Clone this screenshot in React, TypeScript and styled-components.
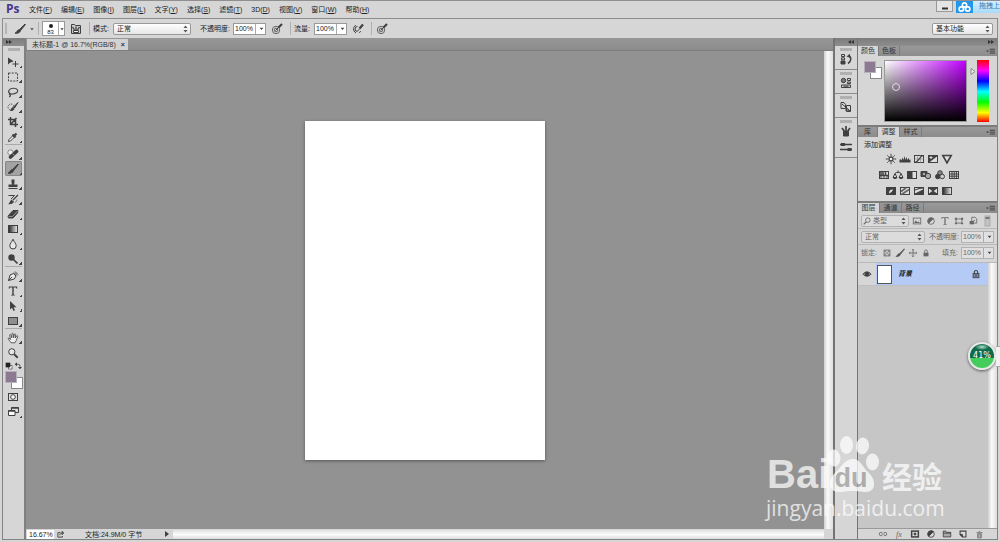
import React from "react";
import styled, { createGlobalStyle, css } from "styled-components";

const sans = `"Liberation Sans", "Noto Sans CJK SC", sans-serif`;

const Global = createGlobalStyle`
  * { box-sizing: border-box; }
  body { margin: 0; font: 7px/10px ${sans}; color: #222; background: #d6d6d6; }
  button, input, select { font: inherit; color: inherit; margin: 0; padding: 0; border: 0; background: none; border-radius: 0; outline: 0; }
  button { display: flex; align-items: center; justify-content: center; flex: none; }
`;

/* ---------- frame ---------- */
const Shell = styled.div`
  position: relative;
  display: flex;
  flex-direction: column;
  height: 100vh;
  overflow: hidden;
  border-top: 1px solid #8f8f8f;
  background: #d6d6d6;
`;
const MenuBar = styled.nav`
  display: flex;
  align-items: center;
  gap: 9px;
  height: 17px;
  padding-left: 6px;
  flex: none;
`;
const Logo = styled.b`
  font: bold 12px/14px "Open Sans", sans-serif;
  color: #46378c;
  width: 14px;
  padding-bottom: 2px;
`;
const MenuItem = styled.button`
  white-space: nowrap;
  display: block;
`;
const OptionsBar = styled.div`
  display: flex;
  align-items: center;
  flex: none;
  height: 20px;
  margin: 0 2px;
  padding: 0 4px 0 2px;
  border: solid #8c8c8c;
  border-width: 1px 1px 0;
`;
const Main = styled.div`
  display: flex;
  flex: 1;
  min-height: 0;
  margin: 0 2px 2px;
  border: solid #838383;
  border-width: 0 1px 1px;
`;
const Divider = styled.i`
  width: 1px;
  height: 13px;
  background: #b0b0b0;
  margin: 0 3px;
`;
const Handle = styled.i`
  width: 2px;
  height: 11px;
  margin-right: 4px;
  background: #b4b4b4;
`;
const Grow = styled.span`
  flex: 1;
`;

/* ---------- controls ---------- */
const IconButton = styled.button<{ $w?: number; $h?: number }>`
  width: ${(p) => p.$w ?? 14}px;
  height: ${(p) => p.$h ?? 12}px;
`;
const FieldLabel = styled.label<{ $w: number; $dim?: boolean; $gap?: number }>`
  flex: none;
  width: ${(p) => p.$w}px;
  margin-left: ${(p) => p.$gap ?? 0}px;
  white-space: nowrap;
  color: ${(p) => (p.$dim ? "#666" : "#222")};
`;
const SelectBox = styled.span<{ $w: number; $dim?: boolean; $pad?: number }>`
  display: flex;
  align-items: center;
  flex: none;
  width: ${(p) => p.$w}px;
  height: 12px;
  padding-right: 2px;
  border: 1px solid ${(p) => (p.$dim ? "#b2b2b2" : "#999")};
  border-radius: 2px;
  background: ${(p) => (p.$dim ? "#dcdcdc" : "linear-gradient(#fff, #e6e6e6)")};
  color: ${(p) => (p.$dim ? "#666" : "#222")};
  select {
    appearance: none;
    flex: 1;
    min-width: 0;
    height: 10px;
    padding-left: ${(p) => p.$pad ?? 3}px;
  }
`;
const NumberBox = styled.span<{ $dim?: boolean }>`
  display: flex;
  align-items: center;
  flex: none;
  height: 12px;
  width: 33px;
  border: 1px solid ${(p) => (p.$dim ? "#b2b2b2" : "#999")};
  background: ${(p) => (p.$dim ? "#e0e0e0" : "#fff")};
  color: ${(p) => (p.$dim ? "#666" : "#222")};
  input {
    width: 21px;
    height: 10px;
    padding-left: 1px;
  }
  button {
    width: 11px;
    height: 10px;
    border-left: 1px solid #aaa;
  }
`;
const BrushBox = styled.button`
  width: 23px;
  height: 15px;
  border: 1px solid #999;
  background: #fff;
`;
const BrushPreview = styled.span`
  display: flex;
  flex-direction: column;
  align-items: center;
  width: 15px;
  font-size: 6px;
  line-height: 6px;
`;
const BrushArrow = styled.span`
  display: flex;
  align-items: center;
  justify-content: center;
  width: 6px;
  height: 13px;
  border-left: 1px solid #aaa;
`;

/* ---------- toolbox ---------- */
const DockHead = styled.div<{ $end?: boolean }>`
  display: flex;
  align-items: center;
  justify-content: ${(p) => (p.$end ? "flex-end" : "flex-start")};
  height: 8px;
  flex: none;
  padding: 0 3px;
  background: linear-gradient(#7c7c7c, #8e8e8e);
`;
const Toolbox = styled.aside`
  display: flex;
  flex-direction: column;
  width: 23px;
  flex: none;
  border-right: 2px solid #808080;
`;
const Grip = styled.i`
  width: 12px;
  height: 3px;
  margin: 2px auto 0;
  background: #b0b0b0;
  flex: none;
`;
const ToolList = styled.div`
  display: flex;
  flex-direction: column;
  padding: 3px 2px 0;
`;
const ToolButton = styled.button<{ $active?: boolean }>`
  height: 15px;
  width: 17px;
  padding-left: 1px;
  border-radius: 2px;
  ${(p) => p.$active && css`background: #a2a2a2; box-shadow: inset 0 0 0 1px #868686;`}
`;
const Flyout = styled.i<{ $hidden?: boolean }>`
  align-self: flex-end;
  width: 3px;
  height: 3px;
  margin-bottom: 1px;
  background: linear-gradient(135deg, transparent 50%, #444 50%);
  visibility: ${(p) => (p.$hidden ? "hidden" : "visible")};
`;
const ToolRule = styled.i`
  height: 1px;
  background: #aaa;
  margin-bottom: 1px;
`;
const MiniRow = styled.div`
  display: flex;
  justify-content: space-between;
  height: 11px;
  align-items: center;
`;
const Swatches = styled.div`
  display: grid;
  grid-template-columns: 6px 6px 6px;
  grid-template-rows: 6px 6px 6px;
  width: 18px;
  flex: none;
`;
const Swatch = styled.button<{ $front?: boolean }>`
  grid-area: ${(p) => (p.$front ? "1 / 1 / 3 / 3" : "2 / 2 / 4 / 4")};
  z-index: ${(p) => (p.$front ? 1 : 0)};
  background: ${(p) => (p.$front ? "#8c7a92" : "#fff")};
  border: 1px solid ${(p) => (p.$front ? "#b9b0bd" : "#888")};
`;

/* ---------- document ---------- */
const Doc = styled.main`
  display: flex;
  flex-direction: column;
  flex: 1;
  min-width: 0;
  background: #929292;
`;
const DocTabs = styled.div`
  display: flex;
  height: 13px;
  flex: none;
  background: linear-gradient(#979797, #8c8c8c);
  border-bottom: 1px solid #7e7e7e;
`;
const DocTab = styled.div`
  display: flex;
  align-items: center;
  gap: 5px;
  margin: 1px 0 0 1px;
  padding: 0 3px 0 5px;
  height: 11px;
  background: #d2d2d2;
  color: #333;
  white-space: nowrap;
`;
const DocBody = styled.div`
  display: flex;
  flex: 1;
  min-height: 0;
`;
const Canvas = styled.div`
  display: flex;
  flex: 1;
  align-items: center;
  justify-content: center;
`;
const Paper = styled.div`
  width: 240px;
  height: 339px;
  background: #fff;
  box-shadow: 0 1px 3px #555;
`;
const ScrollV = styled.div`
  width: 9px;
  flex: none;
  background: linear-gradient(90deg, #cfcfcf, #fafafa 40%, #dedede);
`;
const StatusBar = styled.footer`
  display: flex;
  align-items: center;
  height: 10px;
  flex: none;
  padding-left: 1px;
  background: #d6d6d6;
  line-height: 9px;
  white-space: nowrap;
`;
const Zoom = styled.input`
  width: 27px;
  height: 9px;
  background: #fff;
  padding-left: 2px;
`;
const StatusText = styled.span`
  width: 95px;
  padding-left: 19px;
`;
const ScrollH = styled.div`
  flex: 1;
  height: 9px;
  margin-right: 9px;
  background: linear-gradient(#e0e0e0, #fbfbfb 50%, #dcdcdc);
`;

/* ---------- docks ---------- */
const IconDock = styled.aside`
  display: flex;
  flex-direction: column;
  width: 25px;
  flex: none;
  border: solid #747474;
  border-width: 0 1px 0 2px;
`;
const DockGroup = styled.div`
  display: flex;
  flex-direction: column;
  align-items: center;
  padding-bottom: 2px;
  border-bottom: 1px solid #8b8b8b;
`;
const Panels = styled.aside`
  display: flex;
  flex-direction: column;
  width: 139px;
  flex: none;
`;
const TabStrip = styled.div`
  display: flex;
  height: 10px;
  flex: none;
  padding-right: 2px;
  background: linear-gradient(#999, #8c8c8c);
`;
const PanelTab = styled.button<{ $on?: boolean; $w?: number }>`
  height: 10px;
  width: ${(p) => p.$w ?? 21}px;
  white-space: nowrap;
  color: #333;
  background: ${(p) => (p.$on ? "#d6d6d6" : "transparent")};
  border-right: 1px solid #7c7c7c;
`;
const PanelBody = styled.section<{ $h: number }>`
  height: ${(p) => p.$h}px;
  flex: none;
  border-bottom: 2px solid #7c7c7c;
`;
const ColorBody = styled(PanelBody)`
  display: flex;
  align-items: flex-start;
  padding: 4px 8px 0 6px;
`;
const PairSpot = styled.div`
  padding-top: 1px;
`;
const Field = styled.div`
  position: relative;
  flex: 1;
  height: 62px;
  margin-left: 2px;
  border: 1px solid #999;
  background: linear-gradient(transparent, #000), linear-gradient(90deg, #fff, #c000ff);
`;
const Picker = styled.i`
  position: absolute;
  left: 7px;
  top: 22px;
  width: 8px;
  height: 8px;
  border: 1px solid #ddd;
  border-radius: 50%;
`;
const Hue = styled.div`
  width: 12px;
  height: 62px;
  background: linear-gradient(#f00, #f0f 17%, #00f 34%, #0ff 51%, #0f0 68%, #ff0 85%, #f00);
`;
const HueArrow = styled.span`
  display: flex;
  padding: 8px 1px 0 3px;
`;
const AdjustTitle = styled.div`
  padding: 3px 6px 0;
  height: 16px;
`;
const AdjustRow = styled.div`
  display: flex;
  justify-content: center;
  height: 16px;
  padding-right: 17px;
`;
const LayerRow = styled.div`
  display: flex;
  align-items: center;
  flex: none;
  height: 16px;
  padding: 0 3px;
  border-bottom: 1px solid #bababa;
`;
const LockRow = styled(LayerRow)`
  height: 18px;
  padding-bottom: 2px;
`;
const LayerArea = styled.div`
  display: flex;
  flex: 1;
  min-height: 0;
  background: #c6c6c6;
`;
const LayerList = styled.div`
  flex: 1;
`;
const Layer = styled.div`
  display: flex;
  align-items: center;
  height: 23px;
  background: #b5caf5;
  border-bottom: 1px solid #c0c0c0;
`;
const Eye = styled.button`
  width: 18px;
  height: 22px;
  background: #d6d6d6;
`;
const Thumb = styled.i`
  width: 15px;
  height: 19px;
  margin: 0 6px 0 1px;
  background: #fff;
  border: 1px solid #555;
`;
const LayerName = styled.span`
  flex: 1;
  font-style: italic;
  font-weight: bold;
`;
const LayerFoot = styled.div`
  display: flex;
  align-items: center;
  gap: 2px;
  height: 11px;
  flex: none;
  padding-left: 18px;
  border-top: 1px solid #999;
`;
const Fx = styled.em`
  font: italic 8px/9px "Liberation Serif", serif;
  color: #666;
`;

/* ---------- overlays ---------- */
const WindowTools = styled.div`
  position: absolute;
  top: 0;
  right: 0;
  display: flex;
  align-items: flex-start;
  height: 12px;
`;
const Minimize = styled.button`
  width: 17px;
  height: 11px;
  margin-right: 3px;
  border: 1px solid #999;
  border-top: 0;
  background: #e4e4e4;
`;
const Cloud = styled.button`
  width: 17px;
  height: 12px;
  background: #2196ea;
`;
const Drop = styled.span`
  height: 12px;
  padding-left: 6px;
  white-space: nowrap;
  color: #3c78ab;
  background: linear-gradient(#d3edfd, #a9daf9);
`;
const Meter = styled.div`
  position: absolute;
  right: 0;
  top: 341px;
  display: flex;
  align-items: center;
`;
const Ball = styled.div`
  width: 28px;
  height: 28px;
  border: 2px solid #e6e9e6;
  border-radius: 50%;
  box-shadow: 0 1px 3px #555;
  background: radial-gradient(ellipse 7px 3px at 50% 3px, #b5dfca, transparent), linear-gradient(#0f6a4c 60%, #44cc5c 60%);
  color: #fff;
  font: 8px/24px "DejaVu Sans", sans-serif;
  text-align: center;
`;
const MeterTag = styled.div`
  width: 4px;
  height: 21px;
  background: #f1f1f1;
  border: solid #aaa;
  border-width: 1px 0;
`;
const Watermark = styled.div`
  position: absolute;
  right: 54px;
  bottom: 20px;
  width: 180px;
  color: #fff;
  opacity: 0.72;
  pointer-events: none;
`;
const MarkTop = styled.div`
  display: flex;
  align-items: flex-end;
  height: 61px;
`;
const MarkBai = styled.b`
  width: 60px;
  padding-left: 1px;
  font: bold 40px/40px "Liberation Sans", sans-serif;
`;
const MarkPaw = styled.span`
  display: grid;
  width: 54px;
  height: 60px;
  > * {
    grid-area: 1 / 1;
  }
`;
const MarkDu = styled.b`
  align-self: end;
  justify-self: center;
  padding-right: 4px;
  font: bold 27px/32px "Liberation Sans", sans-serif;
  color: #a2a2a2;
`;
const MarkCn = styled.b`
  padding-left: 2px;
  font: bold 30px/38px "Noto Sans CJK SC", sans-serif;
  white-space: nowrap;
`;
const MarkUrl = styled.div`
  font: 21px/28px "Open Sans", sans-serif;
  white-space: nowrap;
`;

/* ---------- icons, drawn on a 12 x 12 grid ---------- */
const D = "#404040";
const frame = <rect x="1.5" y="2.5" width="9" height="7" fill="#ddd" stroke={D} />;
const brush = (
  <>
    <path d="M11 1 5.6 6.4l1 1L11.4 1.6z" fill={D} />
    <path d="M5 6.6c1 .2 1.4.8 1.3 1.6C5.5 10 3 10.600 1 10.200 3 9.600 3 7.200 5 6.600z" fill={D} />
  </>
);
const target = (
  <>
    <circle cx="5" cy="7" r="3.700" stroke="#666" />
    <circle cx="5" cy="7" r="1.800" stroke="#666" />
    <path d="M4.500 7.500 8 4" />
    <path d="M7.500 4.500 11 1" strokeWidth="2.200" />
  </>
);
const lock = (
  <>
    <rect x="3" y="5.500" width="6" height="4.500" fill="currentColor" stroke="none" />
    <path d="M4.300 5.500V4a1.700 1.700 0 0 1 3.400 0v1.500" />
  </>
);
const icons: Record<string, React.ReactNode> = {
  brush,
  target,
  lock,
  lockOpen: (
    <>
      <rect x="2.500" y="5.500" width="7" height="5" fill="#7484a8" />
      <path d="M4 5.500V3.800a2 2 0 0 1 4 0v1.700M6 7v2" strokeWidth="1.300" />
    </>
  ),
  brushPanel: (
    <>
      <path d="M1.500 10.500v-9h3l1 1h5v8z" fill="#ccc" />
      <path d="m2.500 4 2 3M6 3.500V7M9.500 4l-2 3" strokeWidth="1.300" />
      <path d="M3.500 7.500h5v2h-5z" fill="#eee" />
    </>
  ),
  airbrush: (
    <>
      <path d="M4 2.500C1 3 .5 8 4 10M5.500 3.500a2.500 2.500 0 0 0 0 5" />
      <path d="M5.500 8 8 5.500" />
      <path d="M7.500 5.500 11 1.500" strokeWidth="2.200" />
      <path d="M7 9.500c1 0 1.500-.5 1.500-1.500" />
    </>
  ),
  move: (
    <>
      <path d="M1 1.500v7l2-1.800 3.600-1.500z" fill={D} stroke="none" />
      <path d="M8.500 5v6M5.500 8h6" />
    </>
  ),
  marquee: <rect x="1.500" y="2" width="9" height="8" strokeDasharray="2 1.200" />,
  lasso: <path d="M3 7.500C.5 6 1.500 2.500 6 2.200s6 3 3.500 4.500S4 8.500 3.300 7.600s-1.500 1-.3 1.500-.2 1.400-.8 1.900" strokeWidth="1.100" />,
  quick: (
    <>
      <circle cx="4" cy="6" r="3" strokeDasharray="1 1" />
      <path d="M11 1.500 6.500 6l1 1zM3.500 9.500l2-3 1.700 1.300c-.7 1.500-2 2-3.700 1.700z" fill={D} />
    </>
  ),
  crop: <path d="M3.500 1v7.500H11M1 3.500h7.500V11M9.500 2 4 8" strokeWidth="1.500" />,
  dropper: (
    <>
      <path d="M1.500 10.500 2 8.500l4-4 1.500 1.500-4 4z" fill="#eee" />
      <path d="m5.500 3.500 3 3M7 5l2.500-2.500" strokeWidth="2.200" />
    </>
  ),
  heal: (
    <>
      <circle cx="3.500" cy="4.500" r="2.700" fill="#eee" stroke="#888" />
      <path d="M3.500 9 9.500 3.500" strokeWidth="3.600" strokeLinecap="round" />
      <path d="m5.500 5.500 2 2" stroke="#999" />
    </>
  ),
  stamp: <path d="M4.500 1.500h3v3l-.5 2h3.500v2.500h-9V6.500H5l-.5-2zM1.500 10h9v1h-9z" fill={D} stroke="none" />,
  history: (
    <>
      <path d="M11 2 6 7M2.500 10.500l2-3 1.700 1.300c-.7 1.200-2 1.700-3.700 1.700z" fill={D} strokeWidth="1.300" />
      <path d="M1.500 2.500h6L4 6" />
      <path d="M8 9.500c1.500-.5 2-2 2-3" stroke="#777" />
    </>
  ),
  eraser: (
    <>
      <path d="m1 8 5-5.500h5L10.500 5 6 10H1.500z" fill={D} />
      <path d="m1.500 8.300 4 .2 5-5.500" stroke="#aaa" strokeWidth=".8" />
    </>
  ),
  gradient: (
    <>
      <defs>
        <linearGradient id="ramp">
          <stop offset="0" stopColor="#222" />
          <stop offset="1" stopColor="#eee" />
        </linearGradient>
      </defs>
      <rect x="1.500" y="2.500" width="9" height="7" fill="url(#ramp)" />
    </>
  ),
  drop: <path d="M6 1.200C5 4 2.800 5.500 2.800 7.800a3.200 3.200 0 0 0 6.400 0C9.200 5.500 7 4 6 1.200z" fill="#e8e8e8" />,
  dodge: (
    <>
      <circle cx="4.500" cy="4.500" r="3.200" fill={D} stroke="none" />
      <path d="m6.500 6.500 4 4" strokeWidth="1.700" />
    </>
  ),
  pen: (
    <>
      <path d="M1.500 10.500 3 5l3.500-1.500 2.500 2.500L7.300 9z" fill="#e8e8e8" />
      <path d="m1.500 10.500 3.500-3.500M7 2.500 10 5.500M8 1.500l3 3" />
    </>
  ),
  type: <path d="M1.800 1.500h8.400v2.200h-.6L9 2.500H6.700v7l1.300.4v.6H4v-.6l1.300-.4v-7H3l-.6 1.200h-.6z" fill="currentColor" stroke="none" />,
  arrow: <path d="M3 1v8.500l2-1.800 1.500 3.300 1.500-.7-1.400-3.100H9.500z" fill={D} stroke="none" />,
  rect: <rect x="1.500" y="2.500" width="9" height="7" fill="#8e8e8e" />,
  hand: <path d="M4 10.800 1.200 6.800c-.2-1 .8-1 1.500-.2L3.500 7.500 2.700 3.200c0-.9 1-.9 1.300 0l.8 2.600L5 1.900c.1-.9 1.200-.9 1.300 0l.2 3.800L7.500 2.400c.2-.8 1.200-.6 1.200.2L8.200 6l1.500-2c.5-.7 1.400-.3 1.100.6L9.200 8.500 8 10.800z" fill="#eee" strokeWidth=".8" />,
  zoom: (
    <>
      <circle cx="4.800" cy="4.800" r="3.100" fill="#e8e8e8" />
      <path d="m7.200 7.200 3.500 3.500" strokeWidth="2" />
    </>
  ),
  defaults: (
    <>
      <rect x="5.500" y="5.500" width="5" height="5" fill="#fff" />
      <rect x="1" y="1" width="7" height="7" fill="#222" stroke="none" />
    </>
  ),
  swap: (
    <>
      <path d="M3 3.500h3.500a2.500 2.500 0 0 1 2.500 2.500v3" strokeWidth="1.300" />
      <path d="M4.500.5v6L1 3.500zM6 7.500h6L9 11z" fill={D} stroke="none" />
    </>
  ),
  mask: (
    <>
      {frame}
      <circle cx="6" cy="6" r="2.300" fill="#fff" />
    </>
  ),
  screen: (
    <>
      <path d="M4.500 1.500h7v5h-7z" fill="#ddd" />
      <path d="M1.500 4.500h6.500v5H1.500z" fill="#fff" />
      <path d="M1.500 5h6.500M4.500 2h7" strokeWidth="1.600" />
    </>
  ),
  dockHistory: (
    <>
      <path d="M1.500 1.500h3v2h-3zM1.500 4.800h3v2h-3z" />
      <path d="M1 8h4v3H1z" fill={D} />
      <path d="M8.500 2.500c3.200 1.500 3 6-.5 8" strokeWidth="1.500" />
      <path d="M6.500 3.500 10 .8v4z" fill={D} stroke="none" />
    </>
  ),
  dockProps: (
    <>
      <circle cx="3.500" cy="3.500" r="2.200" fill="#777" />
      <path d="M7.500 1.500h3v2h-3zM7.500 5h3v1.500h-3zM1.500 8h9v2.500h-9z" />
      <path d="M3.500 9.200h5" />
    </>
  ),
  dockClone: (
    <>
      <path d="M1 1.500h3l1.500 2v4H1zM6.500 4.500h4v6h-4z" />
      <path d="m2 3 8 7M5 9h4v1.500" />
    </>
  ),
  dockBrushes: (
    <>
      <path d="M3.500 6.500h5v4.500h-5z" fill={D} />
      <path d="M6 6.500V1M4.500 6.500 2 3M7.500 6.500 10 3" strokeWidth="1.700" />
    </>
  ),
  dockPresets: (
    <>
      <path d="M0 3.500h12M0 8.500h12" strokeWidth="1.400" />
      <path d="M2.500 2v3M1 3.500h4M7.500 8.500h4" strokeWidth="3" />
    </>
  ),
  sun: (
    <>
      <circle cx="6" cy="6" r="2" fill="#eee" strokeWidth="1.300" />
      <path d="M6 .8v2M6 9.200v2M.8 6h2M9.200 6h2M2.300 2.300l1.400 1.400M8.300 8.300l1.400 1.400M9.700 2.300 8.300 3.700M3.700 8.300 2.300 9.700" />
    </>
  ),
  levels: <path d="M.5 9.500V7l1-1 1 1.500 1-3 1 2.500 1-4 1 4 1-3 1 3 1-2 1 2 1-.5v3z" fill={D} stroke="none" />,
  curves: (
    <>
      {frame}
      <path d="M4.500 2.500v7M7.500 2.500v7M1.500 6h9" strokeWidth=".6" stroke="#888" />
      <path d="M2 9.500c4-.5 3.500-5.500 8-7" strokeWidth="1.300" />
    </>
  ),
  exposure: (
    <>
      {frame}
      <path d="M1.500 9.500v-7h9z" fill={D} />
      <path d="M2.500 4.500h3M4 3v3" stroke="#ddd" />
    </>
  ),
  vibrance: <path d="M1.800 2.500h8.400L6 9.800z" strokeWidth="1.600" fill="#ddd" />,
  hueSat: (
    <>
      {frame}
      <path d="M2 6.500h8M3 3v3M5 3v3M7.500 3v3" strokeWidth="1.500" />
      <path d="M2 8h8" strokeDasharray="2 1" />
    </>
  ),
  balance: <path d="M6 1.500v2M3 4.500c1-1.500 5-1.500 6 0M3 4.500 1 8.500h4zM9 4.500 7 8.500h4zM1.500 9.500h3M7.500 9.500h3" />,
  bw: (
    <>
      {frame}
      <path d="M2 3h4v6H2z" fill={D} />
    </>
  ),
  photo: (
    <>
      <path d="M1 2.500h6v5H1z" fill={D} />
      <circle cx="4" cy="5" r="1.500" fill="#ddd" />
      <circle cx="8" cy="7" r="2.700" fill="#aaa" />
    </>
  ),
  mixer: (
    <>
      <circle cx="6" cy="4" r="2.300" fill="#888" />
      <circle cx="3.800" cy="7.500" r="2.300" fill={D} />
      <circle cx="8.200" cy="7.500" r="2.300" fill="#ccc" />
    </>
  ),
  lookup: (
    <>
      {frame}
      <path d="M4 2.500v7M6.200 2.500v7M8.400 2.500v7M1.500 5h9M1.500 7.200h9" />
    </>
  ),
  invert: (
    <>
      {frame}
      <path d="M2 3h8v6H2z" fill={D} />
      <path d="M4 8.500c0-3 1-4 4-4-.500 2-2 3-4 4z" fill="#ddd" stroke="none" />
    </>
  ),
  poster: (
    <>
      {frame}
      <path d="M2 6.500 7 3M2.500 9.500 10 4.500" strokeWidth="1.800" stroke="#666" />
    </>
  ),
  threshold: (
    <>
      {frame}
      <path d="m2 9 8-4v4zM2 5l4-1.500L10 3" fill={D} />
    </>
  ),
  selective: (
    <>
      {frame}
      <path d="M2 3h8L6 6zM2 9l4-3 4 3z" fill={D} />
    </>
  ),
  search: (
    <>
      <circle cx="7" cy="5" r="2.700" />
      <path d="m5 7-3 3" strokeWidth="1.500" />
    </>
  ),
  image: (
    <>
      <rect x="1.500" y="2.500" width="9" height="7" />
      <path d="m2.500 8.500 2-3 2 2 1.500-1 1.500 2z" fill="currentColor" stroke="none" />
    </>
  ),
  half: (
    <>
      <circle cx="6" cy="6" r="4" />
      <path d="M3.200 8.800a4 4 0 0 1 5.600-5.600z" fill="currentColor" />
    </>
  ),
  shape: (
    <>
      <path d="M2.500 3.500h7v5h-7z" />
      <path d="M1 2h2.500v2.500H1zM8.500 2H11v2.500H8.500zM1 8h2.500v2H1zM8.500 8H11v2H8.500z" fill="currentColor" stroke="none" />
    </>
  ),
  smart: (
    <>
      <path d="M4.500 1.500h4l2 2v5h-6z" />
      <path d="M2 6h5v4H2z" fill="currentColor" stroke="none" />
      <path d="M6.500 5.500h2" />
    </>
  ),
  toggle: (
    <>
      <rect x="4" y="1" width="5" height="10" fill="#c2c2c2" stroke="#aaa" />
      <path d="M4.500 3h4" stroke="#777" strokeWidth="2" />
    </>
  ),
  checker: (
    <>
      <rect x="2.500" y="2.500" width="7" height="7" />
      <path d="M3 3h2v2H3zM7 3h2v2H7zM5 5h2v2H5zM3 7h2v2H3zM7 7h2v2H7z" fill="currentColor" stroke="none" opacity=".7" />
    </>
  ),
  cross: <path d="M6 1.500v9M1.500 6h9M4.700 2.800 6 1.500l1.300 1.300M4.700 9.200 6 10.500l1.300-1.300M2.800 4.700 1.500 6l1.300 1.300M9.200 4.700 10.500 6 9.200 7.300" />,
  eye: (
    <>
      <path d="M2 6.200C4 3.200 8 3.200 10 6.200 8 8.800 4 8.800 2 6.200z" fill="#999" />
      <circle cx="6" cy="6" r="1.800" fill={D} />
    </>
  ),
  link: <path d="M5 4H3.500a2 2 0 0 0 0 4H5M7 4h1.500a2 2 0 0 1 0 4H7M4 6h4" />,
  addMask: (
    <>
      <rect x="2" y="2.500" width="8" height="7" fill="#ddd" strokeWidth="1.800" />
      <circle cx="6" cy="6" r="1.300" fill={D} />
    </>
  ),
  folder: <path d="M1.500 9.500v-7h3l1 1.500h5v5.500zM1.500 5h9" fill="#aaa" />,
  newLayer: (
    <>
      <path d="M2.500 2.500h7v7h-4l-3-3z" fill="#ddd" strokeWidth="1.300" />
      <path d="M2.500 6.500h3v3z" fill={D} />
    </>
  ),
  trash: <path d="M2 3.500h8M5 2h2M3.500 5h5v5.500h-5zM5 5v5M7 5v5" />,
  share: <path d="M6 3.500H2.500v6h6V8M5 7c0-2 1.500-3 4-3M8 1.800 10.500 4 8 6.200z" fill="none" strokeWidth="1.200" />,
  flyout: (
    <>
      <path d="M0 4.500h4L2 7z" fill={D} stroke="none" />
      <path d="M5 3h7M5 5.500h7M5 8h7" stroke="#444" strokeWidth="1.300" />
    </>
  ),
  down: <path d="M3.500 5h5L6 8z" fill={D} stroke="none" />,
  play: <path d="M4 3v6l4-3z" fill={D} stroke="none" />,
};

const Glyph = styled.svg`
  display: block;
  flex: none;
`;
const Icon = ({ n, s = 12, c = D }: { n: string; s?: number; c?: string }) => (
  <Glyph width={s} height={s} viewBox="0 0 12 12" fill="none" stroke="currentColor" color={c} aria-hidden="true">
    {icons[n]}
  </Glyph>
);
const Spin = () => (
  <Glyph width="5" height="8" viewBox="0 0 5 8" fill="#555" aria-hidden="true">
    <path d="M0.500 3 2.500 0.500 4.500 3zM0.500 5 2.500 7.500 4.500 5z" />
  </Glyph>
);
const Chevrons = ({ left }: { left?: boolean }) => (
  <Glyph width="6" height="4" viewBox="0 0 6 4" fill="#333" aria-hidden="true">
    <path d={left ? "M3 0v4L0 2zM6 0v4L3 2z" : "M0 0v4l3-2zM3 0v4l3-2z"} />
  </Glyph>
);

const Percent = ({ id, dim }: { id: string; dim?: boolean }) => (
  <NumberBox $dim={dim}>
    <input id={id} defaultValue="100%" />
    <button aria-label="展开">
      <Icon n="down" s={9} />
    </button>
  </NumberBox>
);
const ColorPair = () => (
  <Swatches>
    <Swatch $front aria-label="前景色" />
    <Swatch aria-label="背景色" />
  </Swatches>
);
const Strip = ({ tabs, on, widths }: { tabs: string[]; on: number; widths: number[] }) => (
  <TabStrip>
    {tabs.map((t, i) => (
      <PanelTab key={t} $on={i === on} $w={widths[i]}>
        {t}
      </PanelTab>
    ))}
    <Grow />
    <IconButton $w={10} $h={10} aria-label="面板菜单">
      <Icon n="flyout" s={9} />
    </IconButton>
  </TabStrip>
);

const menus = [["文件", "F"], ["编辑", "E"], ["图像", "I"], ["图层", "L"], ["文字", "Y"], ["选择", "S"], ["滤镜", "T"], ["3D", "D"], ["视图", "V"], ["窗口", "W"], ["帮助", "H"]];
const toolGroups = [
  ["move", "marquee", "lasso", "quick", "crop", "dropper"],
  ["heal", "brush", "stamp", "history", "eraser", "gradient", "drop", "dodge"],
  ["pen", "type", "arrow", "rect"],
  ["hand", "zoom"],
];
const adjustments = [
  ["sun", "levels", "curves", "exposure", "vibrance"],
  ["hueSat", "balance", "bw", "photo", "mixer", "lookup"],
  ["invert", "poster", "threshold", "selective", "gradient"],
];
const G = "#666";

export default function App() {
  return (
    <>
      <Global />
      <Shell>
        <MenuBar>
          <Logo>Ps</Logo>
          {menus.map(([name, key]) => (
            <MenuItem key={name}>
              {name}(<u>{key}</u>)
            </MenuItem>
          ))}
        </MenuBar>

        <OptionsBar>
          <Handle />
          <IconButton $w={18} aria-label="画笔工具"><Icon n="brush" /></IconButton>
          <IconButton $w={6} aria-label="工具预设"><Icon n="down" s={8} /></IconButton>
          <Divider />
          <BrushBox aria-label="画笔大小">
            <BrushPreview>
              <Glyph width="6" height="6" viewBox="0 0 6 6"><circle cx="3" cy="3" r="2" fill="#222" /></Glyph>
              83
            </BrushPreview>
            <BrushArrow><Icon n="down" s={8} /></BrushArrow>
          </BrushBox>
          <IconButton $w={21} aria-label="画笔面板"><Icon n="brushPanel" /></IconButton>
          <Divider />
          <FieldLabel $w={20} htmlFor="mode">模式:</FieldLabel>
          <SelectBox $w={78}>
            <select id="mode"><option>正常</option></select>
            <Spin />
          </SelectBox>
          <FieldLabel $w={33} $gap={9} htmlFor="opacity">不透明度:</FieldLabel>
          <Percent id="opacity" />
          <IconButton $w={21} aria-label="不透明度压力"><Icon n="target" /></IconButton>
          <Divider />
          <FieldLabel $w={20} htmlFor="flow">流量:</FieldLabel>
          <Percent id="flow" />
          <IconButton $w={21} aria-label="喷枪"><Icon n="airbrush" /></IconButton>
          <Divider />
          <IconButton aria-label="大小压力"><Icon n="target" /></IconButton>
          <Grow />
          <SelectBox $w={61}>
            <select aria-label="工作区"><option>基本功能</option></select>
            <Spin />
          </SelectBox>
        </OptionsBar>

        <Main>
          <Toolbox>
            <DockHead><Chevrons /></DockHead>
            <Grip />
            <ToolList>
              {toolGroups.map((group, g) => (
                <React.Fragment key={g}>
                  {g > 0 && <ToolRule />}
                  {group.map((t) => (
                    <ToolButton key={t} $active={t === "brush"} aria-label={t}>
                      <Icon n={t} />
                      <Flyout $hidden={t === "zoom"} />
                    </ToolButton>
                  ))}
                </React.Fragment>
              ))}
              <MiniRow>
                <IconButton $w={8} $h={9} aria-label="默认颜色"><Icon n="defaults" s={8} /></IconButton>
                <IconButton $w={8} $h={9} aria-label="切换颜色"><Icon n="swap" s={8} /></IconButton>
              </MiniRow>
              <ColorPair />
              <ToolButton aria-label="快速蒙版"><Icon n="mask" /><Flyout $hidden /></ToolButton>
              <ToolButton aria-label="屏幕模式"><Icon n="screen" /><Flyout /></ToolButton>
            </ToolList>
          </Toolbox>

          <Doc>
            <DocTabs>
              <DocTab>
                未标题-1 @ 16.7%(RGB/8)
                <button aria-label="关闭"><b>×</b></button>
              </DocTab>
            </DocTabs>
            <DocBody>
              <Canvas><Paper /></Canvas>
              <ScrollV />
            </DocBody>
            <StatusBar>
              <Zoom aria-label="缩放" defaultValue="16.67%" />
              <IconButton $w={12} $h={9} aria-label="共享"><Icon n="share" s={9} /></IconButton>
              <StatusText>文档:24.9M/0 字节</StatusText>
              <IconButton $w={12} $h={9} aria-label="状态菜单"><Icon n="play" /></IconButton>
              <ScrollH />
            </StatusBar>
          </Doc>

          <IconDock>
            <DockHead $end><Chevrons left /></DockHead>
            {[["dockHistory"], ["dockProps"], ["dockClone"], ["dockBrushes", "dockPresets"]].map((group) => (
              <DockGroup key={group[0]}>
                <Grip />
                {group.map((n) => (
                  <IconButton key={n} $w={20} $h={16} aria-label={n}><Icon n={n} /></IconButton>
                ))}
              </DockGroup>
            ))}
          </IconDock>

          <Panels>
            <DockHead $end><Chevrons /></DockHead>
            <Strip tabs={["颜色", "色板"]} on={0} widths={[21, 21]} />
            <ColorBody $h={71}>
              <PairSpot><ColorPair /></PairSpot>
              <Field><Picker /></Field>
              <HueArrow>
                <Glyph width="6" height="7" viewBox="0 0 6 7"><path d="M1 .5v6l4-3z" fill="#eee" stroke="#888" /></Glyph>
              </HueArrow>
              <Hue />
            </ColorBody>
            <Strip tabs={["库", "调整", "样式"]} on={1} widths={[20, 22, 22]} />
            <PanelBody $h={66}>
              <AdjustTitle>添加调整</AdjustTitle>
              {adjustments.map((row, i) => (
                <AdjustRow key={i}>
                  {row.map((n) => (
                    <IconButton key={n} aria-label={n}><Icon n={n} /></IconButton>
                  ))}
                </AdjustRow>
              ))}
            </PanelBody>
            <Strip tabs={["图层", "通道", "路径"]} on={0} widths={[22, 22, 22]} />
            <LayerRow>
              <SelectBox $w={48} $dim $pad={1}>
                <Icon n="search" s={10} c={G} />
                <select aria-label="过滤"><option>类型</option></select>
                <Spin />
              </SelectBox>
              <Grow />
              {["image", "half", "type", "shape", "smart"].map((n) => (
                <IconButton key={n} aria-label={n}><Icon n={n} s={10} c={G} /></IconButton>
              ))}
              <IconButton aria-label="过滤开关"><Icon n="toggle" c={G} /></IconButton>
            </LayerRow>
            <LayerRow>
              <SelectBox $w={64} $dim>
                <select aria-label="混合模式"><option>正常</option></select>
                <Spin />
              </SelectBox>
              <Grow />
              <FieldLabel $w={32} $dim htmlFor="lopacity">不透明度:</FieldLabel>
              <Percent id="lopacity" dim />
            </LayerRow>
            <LockRow>
              <FieldLabel as="span" $w={19} $dim>锁定:</FieldLabel>
              {["checker", "brush", "cross", "lock"].map((n) => (
                <IconButton key={n} $w={13} aria-label={n}><Icon n={n} s={10} c={G} /></IconButton>
              ))}
              <Grow />
              <FieldLabel $w={19} $dim htmlFor="fill">填充:</FieldLabel>
              <Percent id="fill" dim />
            </LockRow>
            <LayerArea>
              <LayerList>
                <Layer>
                  <Eye aria-label="可见性"><Icon n="eye" /></Eye>
                  <Thumb />
                  <LayerName>背景</LayerName>
                  <IconButton $w={24} aria-label="已锁定"><Icon n="lockOpen" s={10} /></IconButton>
                </Layer>
              </LayerList>
              <ScrollV />
            </LayerArea>
            <LayerFoot>
              <IconButton aria-label="链接"><Icon n="link" s={10} c={G} /></IconButton>
              <IconButton aria-label="图层样式"><Fx>fx</Fx></IconButton>
              {["addMask", "half", "folder", "newLayer"].map((n) => (
                <IconButton key={n} aria-label={n}><Icon n={n} s={10} /></IconButton>
              ))}
              <IconButton aria-label="删除"><Icon n="trash" s={9} c={G} /></IconButton>
            </LayerFoot>
          </Panels>
        </Main>

        <WindowTools>
          <Minimize aria-label="最小化">
            <Glyph width="8" height="8" viewBox="0 0 8 8"><path d="M1 6.500h6" stroke="#333" strokeWidth="2" /></Glyph>
          </Minimize>
          <Cloud aria-label="网盘">
            <Glyph width="13" height="11" viewBox="0 0 13 11" fill="none" stroke="#fff" strokeWidth="1.700">
              <circle cx="6.500" cy="3" r="2.200" />
              <circle cx="3.300" cy="7" r="2.200" />
              <circle cx="9.700" cy="7" r="2.200" />
            </Glyph>
          </Cloud>
          <Drop>拖拽上</Drop>
        </WindowTools>

        <Watermark>
          <MarkTop>
            <MarkBai>Bai</MarkBai>
            <MarkPaw>
              <Glyph width="54" height="60" viewBox="0 0 54 60" fill="#fff">
                <ellipse cx="8" cy="24" rx="6.500" ry="8.500" transform="rotate(-8 8 24)" />
                <ellipse cx="20.500" cy="11" rx="6.500" ry="9" />
                <ellipse cx="36.500" cy="12" rx="6.500" ry="8.500" transform="rotate(10 36.500 12)" />
                <ellipse cx="46.500" cy="28" rx="6.500" ry="8.500" />
                <path d="M27 25c7 0 9 7 15 13 9 8 8 20-2 20-5 0-8-1-14-1s-8 1-13 1C2 58 1 46 10 38c6-6 9-13 17-13z" />
              </Glyph>
              <MarkDu>du</MarkDu>
            </MarkPaw>
            <MarkCn>经验</MarkCn>
          </MarkTop>
          <MarkUrl>jingyan.baidu.com</MarkUrl>
        </Watermark>

        <Meter>
          <Ball>41%</Ball>
          <MeterTag />
        </Meter>
      </Shell>
    </>
  );
}
